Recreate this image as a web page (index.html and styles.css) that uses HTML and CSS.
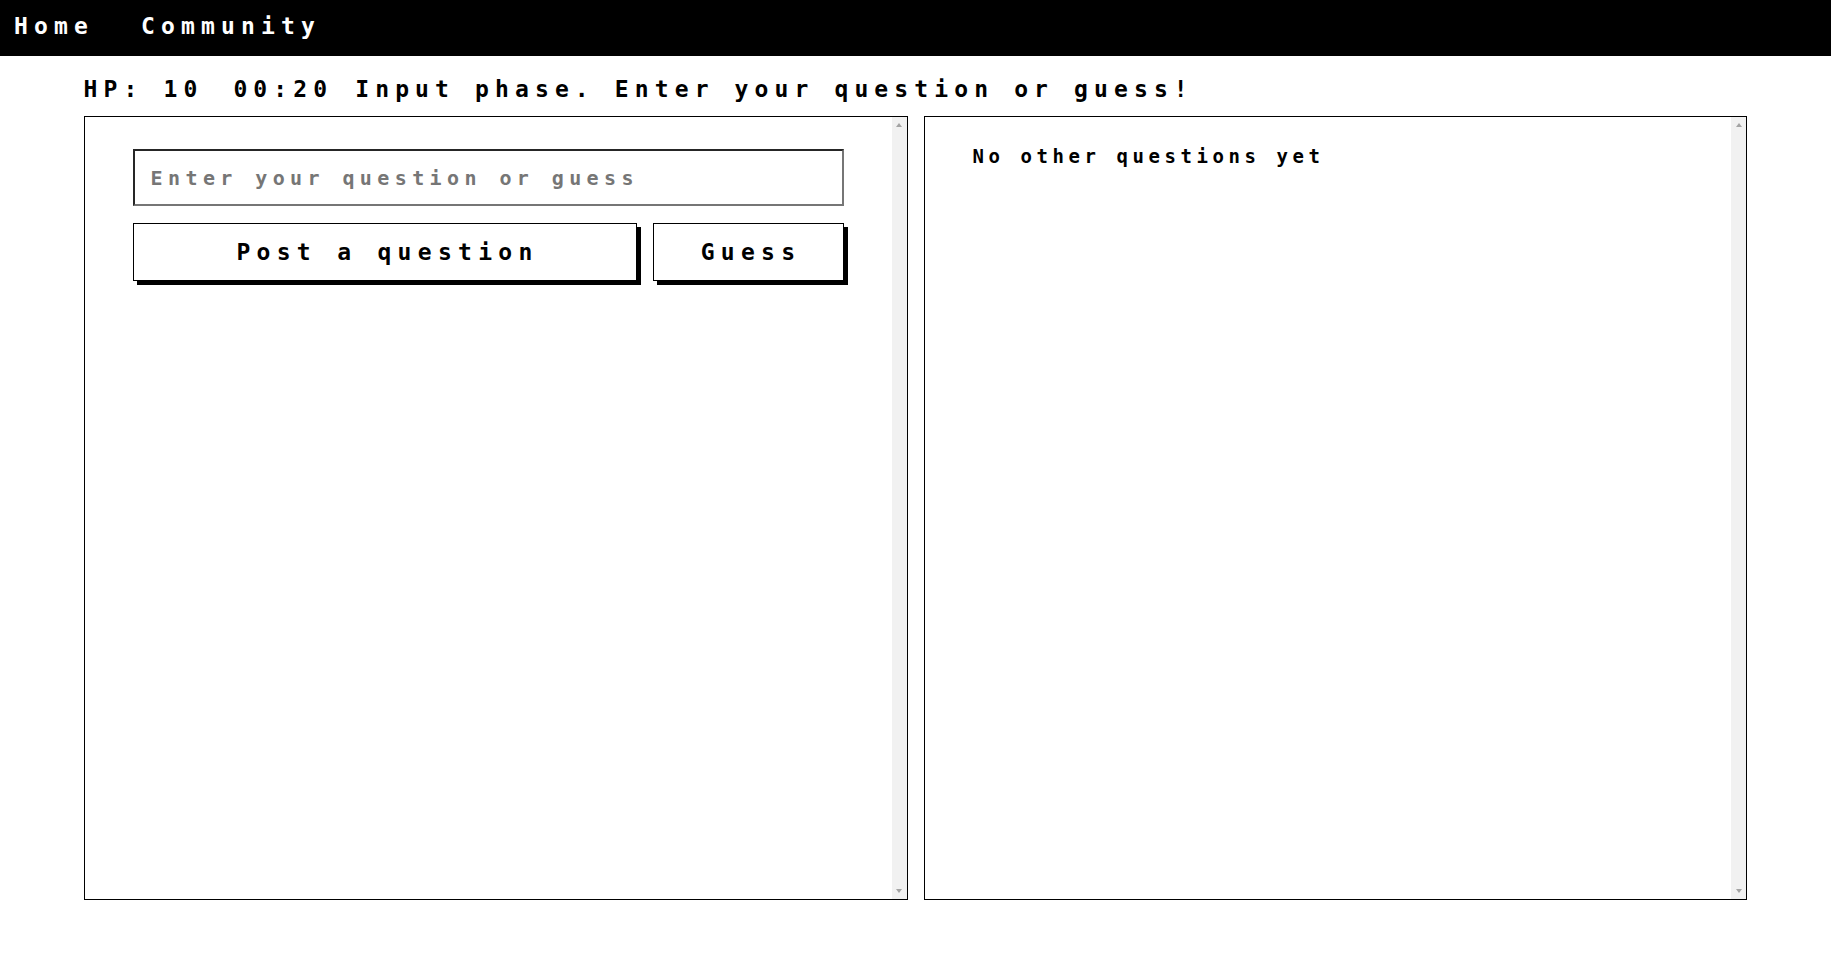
FILE: index.html
```html
<!DOCTYPE html>
<html lang="en">
<head>
<meta charset="utf-8">
<title>Game</title>
<link rel="stylesheet" href="styles.css">
</head>
<body>
<nav class="topbar">
  <a class="nav-link" href="#">Home</a>
  <a class="nav-link" href="#">Community</a>
</nav>
<main class="game">
  <div class="status"><span class="hp">HP: 10</span><span class="timer">00:20</span><span class="phase">Input phase. Enter your question or guess!</span></div>
  <div class="panels">
    <section class="panel">
      <div class="panel-body">
        <input class="ask-input" type="text" placeholder="Enter your question or guess">
        <div class="actions">
          <button class="btn">Post a question</button>
          <button class="btn">Guess</button>
        </div>
      </div>
      <div class="scrolltrack" aria-hidden="true"><span class="arrow arrow-up"></span><span class="arrow arrow-down"></span></div>
    </section>
    <section class="panel">
      <div class="panel-body panel-others">
        <p class="empty">No other questions yet</p>
      </div>
      <div class="scrolltrack" aria-hidden="true"><span class="arrow arrow-up"></span><span class="arrow arrow-down"></span></div>
    </section>
  </div>
</main>
</body>
</html>
```
FILE: styles.css
```css
* {
  box-sizing: border-box;
}

body {
  margin: 0;
  background: #fff;
  color: #000;
  font-family: "DejaVu Sans Mono", "Liberation Mono", monospace;
  font-weight: bold;
}

.topbar {
  display: flex;
  gap: 47px;
  height: 56px;
  padding: 13px 14px 0;
  background: #000;
}

.nav-link {
  color: #fff;
  text-decoration: none;
  font-size: 23px;
  letter-spacing: 6.15px;
}

.game {
  width: fit-content;
  margin: 0 auto;
}

.status {
  margin: 20px 0 14px;
  font-size: 23px;
  letter-spacing: 6.12px;
}

.timer {
  margin-left: 30px;
  margin-right: 22px;
}

.panels {
  display: flex;
  gap: 16px;
}

.panel {
  display: flex;
  width: 45vw;
  height: 784px;
  border: 1px solid #000;
}

.panel-body {
  flex: 1;
  min-width: 0;
  overflow: hidden;
  padding: 32px 48px;
}

.scrolltrack {
  flex: 0 0 15px;
  display: flex;
  flex-direction: column;
  justify-content: space-between;
  align-items: center;
  padding: 6px 0 6px;
  background: #f1f1f1;
}

.arrow {
  width: 0;
  height: 0;
  border-left: 3.5px solid transparent;
  border-right: 3.5px solid transparent;
}

.arrow-up {
  border-bottom: 4px solid #a3a3a3;
}

.arrow-down {
  border-top: 4px solid #a3a3a3;
}

.ask-input {
  display: block;
  width: 100%;
  height: 57px;
  border: 2px solid;
  border-color: #262626 #767676 #767676 #262626;
  padding: 0 16px;
  font-family: inherit;
  font-weight: bold;
  font-size: 20px;
  letter-spacing: 5.4px;
  color: #000;
  outline: none;
}

.ask-input::placeholder {
  color: #767676;
}

.actions {
  display: grid;
  grid-template-columns: 1fr 191px;
  gap: 16px;
  margin-top: 17px;
}

.btn {
  height: 58px;
  background: #fff;
  border: 1px solid #000;
  box-shadow: 4px 4px 0 #000;
  font-family: inherit;
  font-weight: bold;
  font-size: 23px;
  letter-spacing: 6.3px;
  color: #000;
  padding: 0 0 0 6px;
}

.panel-others {
  padding-top: 28px;
}

.empty {
  margin: 0;
  font-size: 19px;
  letter-spacing: 4.56px;
}
```
